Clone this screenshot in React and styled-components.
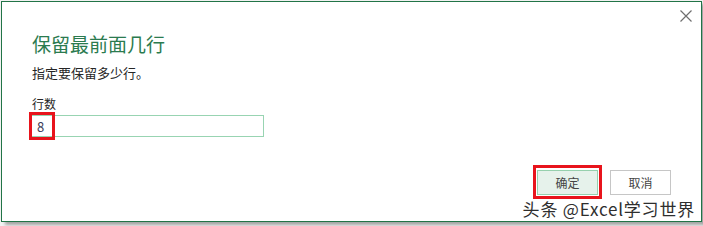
import React from "react";
import styled, { createGlobalStyle } from "styled-components";

const GlobalStyle = createGlobalStyle`
  html, body {
    margin: 0;
    padding: 0;
    background: #f2f2f2;
  }
  body {
    font-family: "Noto Sans CJK SC", "Liberation Sans", sans-serif;
  }
`;

const Frame = styled.div`
  position: relative;
  width: 703px;
  height: 226px;
  box-sizing: border-box;
  padding: 1px 2px 4px 1px;
`;

const Dialog = styled.div`
  position: relative;
  width: 701px;
  height: 221px;
  box-sizing: border-box;
  border: 1px solid #227447;
  background: #ffffff;
  box-shadow: 4px 3px 3px rgba(0, 0, 0, 0.32);
  display: flex;
  flex-direction: column;
`;

const CloseRow = styled.div`
  display: flex;
  justify-content: flex-end;
  padding: 8px 9px 0 0;
`;

const CloseButton = styled.button`
  width: 12px;
  height: 12px;
  padding: 0;
  border: none;
  background: none;
  display: flex;
  cursor: pointer;
`;

const Body = styled.div`
  display: flex;
  flex-direction: column;
  align-items: flex-start;
  padding: 0 30px;
`;

const Title = styled.h1`
  margin: 12px 0 0;
  font-size: 19px;
  line-height: 1;
  font-weight: 400;
  color: #2b7b4f;
`;

const Text = styled.p`
  margin: ${(p) => p.$top}px 0 0;
  font-size: ${(p) => p.$size}px;
  line-height: 1;
  color: #262626;
`;

const InputWrap = styled.div`
  position: relative;
  margin: 5px 0 0 -3px;
`;

const Input = styled.input`
  display: block;
  width: 235px;
  height: 22px;
  box-sizing: border-box;
  border: 1px solid #98d4b2;
  outline: none;
  padding: 0 0 0 7px;
  font-family: "Noto Sans CJK SC", "Liberation Sans", sans-serif;
  font-size: 13px;
  color: #3b3b58;
  background: #fff;
`;

const Highlight = styled.div`
  position: absolute;
  box-sizing: border-box;
  border: 3px solid #e8141c;
  pointer-events: none;
`;

const InputMark = styled(Highlight)`
  left: 0;
  top: -3px;
  width: 26px;
  height: 28px;
`;

const ButtonMark = styled(Highlight)`
  inset: -4px;
`;

const Footer = styled.div`
  margin-top: auto;
  display: flex;
  justify-content: flex-end;
  gap: 12px;
  padding: 0 30px 26px 0;
`;

const ButtonSlot = styled.div`
  position: relative;
`;

const Button = styled.button`
  width: 61px;
  height: 25px;
  box-sizing: border-box;
  border: 1px solid ${(p) => (p.$primary ? "#96d0ad" : "#c6c6c6")};
  background: ${(p) => (p.$primary ? "#e6f2eb" : "#ffffff")};
  font-family: "Noto Sans CJK SC", "Liberation Sans", sans-serif;
  font-size: 12px;
  color: #444;
  padding: 0;
  cursor: pointer;
`;

const Watermark = styled.div`
  position: absolute;
  right: 8px;
  bottom: 9px;
  font-family: "Noto Sans CJK SC", "Liberation Sans", sans-serif;
  font-size: 17px;
  letter-spacing: 0.8px;
  line-height: 1;
  color: #2e2e2e;
  text-shadow: 0 0 2px #fff, 0 0 2px #fff;
  white-space: nowrap;
`;

const App = () => {
  return (
    <>
      <GlobalStyle />
      <Frame>
        <Dialog>
          <CloseRow>
            <CloseButton aria-label="关闭">
              <svg width="12" height="12" viewBox="0 0 12 12">
                <path d="M0.5 0.5L11.5 11.5M11.5 0.5L0.5 11.5" stroke="#6f6f6f" strokeWidth="1.2" fill="none" />
              </svg>
            </CloseButton>
          </CloseRow>
          <Body>
            <Title>保留最前面几行</Title>
            <Text $top={13} $size={13}>指定要保留多少行。</Text>
            <Text $top={19} $size={12}>行数</Text>
            <InputWrap>
              <Input defaultValue="8" />
              <InputMark />
            </InputWrap>
          </Body>
          <Footer>
            <ButtonSlot>
              <Button $primary>确定</Button>
              <ButtonMark />
            </ButtonSlot>
            <ButtonSlot>
              <Button>取消</Button>
            </ButtonSlot>
          </Footer>
        </Dialog>
        <Watermark>头条 @Excel学习世界</Watermark>
      </Frame>
    </>
  );
};

export default App;
